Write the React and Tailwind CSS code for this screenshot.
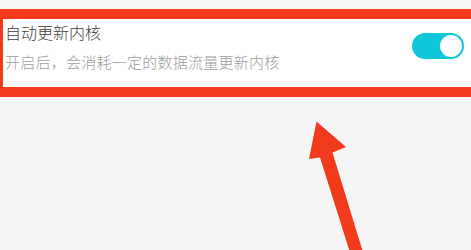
import React from "react";

function Toggle({ on }) {
  return (
    <div
      className={`flex h-[26px] w-[52px] shrink-0 items-center rounded-full p-[2px] ${
        on ? "justify-end bg-[#10c6d9]" : "justify-start bg-gray-300"
      }`}
    >
      <div className="h-[22px] w-[22px] rounded-full bg-white" />
    </div>
  );
}

function Arrow() {
  // annotation arrow drawn over the page
  return (
    <svg
      className="pointer-events-none absolute left-0 top-0"
      width="471"
      height="250"
      viewBox="0 0 471 250"
    >
      <polygon
        fill="#f23a1c"
        points="316.5,121.5 346,147 332.5,152.5 366,262 353,262 320,157.5 309,159"
      />
    </svg>
  );
}

export default function App() {
  return (
    <div
      className="relative h-[250px] w-[471px] overflow-hidden bg-[#f5f5f5]"
      style={{ fontFamily: '"Noto Sans CJK SC", "Noto Sans", sans-serif' }}
    >
      <div className="h-[9px] bg-[#f8f8f8]" />
      <div className="border-b-[10px] border-l-[3px] border-t-[10px] border-[#f23a1c] bg-white">
        <div className="flex h-[68px] items-start justify-between pl-[2px] pr-[7px]">
          <div className="flex flex-col pt-[2px]">
            <div className="text-[16px] font-light leading-[22px] text-[#3c3c3c]">
              自动更新内核
            </div>
            <div className="mt-[9px] text-[15px] font-light leading-[20px] tracking-[0.25px] text-[#9c9c9c]">
              开启后，会消耗一定的数据流量更新内核
            </div>
          </div>
          <div className="pt-[14px]">
            <Toggle on />
          </div>
        </div>
      </div>
      <Arrow />
    </div>
  );
}
